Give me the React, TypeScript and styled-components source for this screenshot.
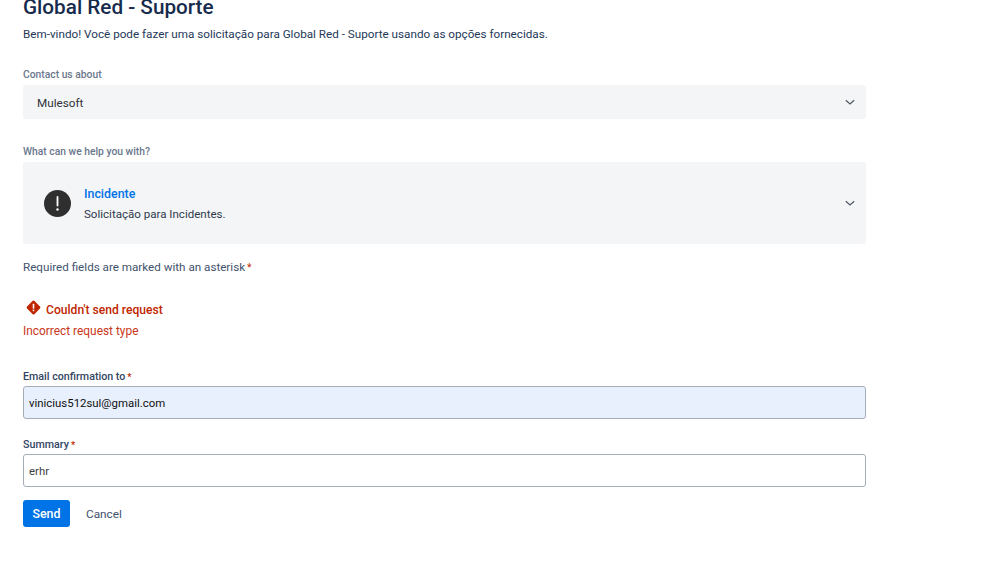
import React from "react";
import styled, { createGlobalStyle } from "styled-components";

const GlobalStyle = createGlobalStyle`
  html, body {
    margin: 0;
    padding: 0;
    background: #ffffff;
    font-family: Roboto, "Open Sans", sans-serif;
    overflow: hidden;
  }
`;

const Page = styled.div`
  width: 843px;
  height: 565px;
  padding-left: 23px;
  overflow: hidden;
`;

const Title = styled.h1`
  margin: -5px 0 0;
  font-size: 20.7px;
  line-height: 24px;
  font-weight: 500;
  color: #172b4d;
`;

const Intro = styled.p`
  margin: 5px 0 0;
  font-size: 11.7px;
  line-height: 20px;
  color: #253858;
`;

const FieldLabel = styled.div<{ $strong?: boolean }>`
  font-size: ${(p) => (p.$strong ? "10.7px" : "10.3px")};
  line-height: 14px;
  font-weight: 500;
  color: ${(p) => (p.$strong ? "#344563" : "#6b778c")};
`;

const Section = styled.section<{ $top: number; $gap?: number }>`
  margin-top: ${(p) => p.$top}px;
  display: flex;
  flex-direction: column;
  gap: ${(p) => p.$gap ?? 3}px;
`;

const SelectBox = styled.div`
  height: 34px;
  box-sizing: border-box;
  padding: 0 10px 0 14px;
  display: flex;
  align-items: center;
  justify-content: space-between;
  background: #f4f5f7;
  border-radius: 3px;
  font-size: 11.7px;
  color: #2f3237;
`;

const SelectValue = styled.span`
  padding-top: 1px;
`;

const RequestBox = styled(SelectBox)`
  height: 82px;
  padding-left: 21px;
  justify-content: flex-start;
  gap: 13px;
`;

const RequestText = styled.div`
  flex: 1;
  display: flex;
  flex-direction: column;
  padding-top: 2px;
`;

const RequestName = styled.div`
  font-size: 12.4px;
  line-height: 20px;
  font-weight: 500;
  color: #0073e6;
`;

const RequestDesc = styled.div`
  font-size: 11.55px;
  line-height: 20px;
  color: #2f3a4c;
`;

const Required = styled.p`
  margin: 13px 0 0;
  font-size: 11.65px;
  line-height: 20px;
  color: #42526e;
`;

const Star = styled.span`
  color: #bf2600;
  margin-left: 2px;
  font-size: 0.9em;
`;

const ErrorTitle = styled.div`
  margin-top: 22px;
  display: flex;
  align-items: center;
  gap: 5px;
  padding-left: 3px;
  font-size: 12.1px;
  line-height: 20px;
  font-weight: 500;
  color: #bf2600;
`;

const ErrorGlyph = styled.span`
  display: flex;
  margin-top: -6px;
`;

const ErrorText = styled.div`
  margin-top: 1px;
  font-size: 11.9px;
  line-height: 20px;
  color: #c9371a;
`;

const TextInput = styled.div<{ $filled?: boolean }>`
  height: 33px;
  box-sizing: border-box;
  padding: 1px 5px 0;
  display: flex;
  align-items: center;
  background: ${(p) => (p.$filled ? "#e8f0fe" : "#ffffff")};
  border: 1px solid #a5adba;
  border-radius: 3px;
  font-size: 11.4px;
  color: ${(p) => (p.$filled ? "#111111" : "#3a3f47")};
`;

const Actions = styled.div`
  margin-top: 13px;
  display: flex;
  align-items: center;
  gap: 16px;
`;

const SendButton = styled.button`
  width: 47px;
  height: 27px;
  padding: 0;
  border: 0;
  border-radius: 3px;
  background: #0073e6;
  color: #ffffff;
  font: 500 12.4px Roboto, sans-serif;
`;

const CancelButton = styled.button`
  padding: 0;
  border: 0;
  background: none;
  color: #42526e;
  font: 400 11.8px Roboto, sans-serif;
`;

const Chevron = () => (
  <svg width="12" height="12" viewBox="0 0 12 12" fill="none">
    <path d="M1.8 4.2 6 8l4.2-3.8" stroke="#505866" strokeWidth="1.2" />
  </svg>
);

const AlertCircle = () => (
  <svg width="27" height="27" viewBox="0 0 27 27">
    <circle cx="13.5" cy="13.5" r="13.5" fill="#2f2f2f" />
    <rect x="12.6" y="6" width="1.8" height="10.5" rx="0.9" fill="#ffffff" />
    <circle cx="13.5" cy="19.5" r="1.2" fill="#ffffff" />
  </svg>
);

const ErrorIcon = () => (
  <svg width="15" height="15" viewBox="0 0 15 15">
    <rect x="2.2" y="2.2" width="10.6" height="10.6" rx="1.5" fill="#bf2600" transform="rotate(45 7.5 7.5)" />
    <rect x="6.7" y="3.8" width="1.6" height="4.8" fill="#ffffff" />
    <rect x="6.7" y="9.6" width="1.6" height="1.6" fill="#ffffff" />
  </svg>
);

export default function App() {
  return (
    <>
      <GlobalStyle />
      <Page>
        <Title>Global Red - Suporte</Title>
        <Intro>Bem-vindo! Você pode fazer uma solicitação para Global Red - Suporte usando as opções fornecidas.</Intro>

        <Section $top={24}>
          <FieldLabel>Contact us about</FieldLabel>
          <SelectBox>
            <SelectValue>Mulesoft</SelectValue>
            <Chevron />
          </SelectBox>
        </Section>

        <Section $top={26}>
          <FieldLabel>What can we help you with?</FieldLabel>
          <RequestBox>
            <AlertCircle />
            <RequestText>
              <RequestName>Incidente</RequestName>
              <RequestDesc>Solicitação para Incidentes.</RequestDesc>
            </RequestText>
            <Chevron />
          </RequestBox>
        </Section>

        <Required>
          Required fields are marked with an asterisk<Star>*</Star>
        </Required>

        <ErrorTitle>
          <ErrorGlyph>
            <ErrorIcon />
          </ErrorGlyph>
          Couldn't send request
        </ErrorTitle>
        <ErrorText>Incorrect request type</ErrorText>

        <Section $top={29} $gap={2}>
          <FieldLabel $strong>
            Email confirmation to<Star>*</Star>
          </FieldLabel>
          <TextInput $filled>vinicius512sul@gmail.com</TextInput>
        </Section>

        <Section $top={19} $gap={2}>
          <FieldLabel $strong>
            Summary<Star>*</Star>
          </FieldLabel>
          <TextInput>erhr</TextInput>
        </Section>

        <Actions>
          <SendButton>Send</SendButton>
          <CancelButton>Cancel</CancelButton>
        </Actions>
      </Page>
    </>
  );
}
